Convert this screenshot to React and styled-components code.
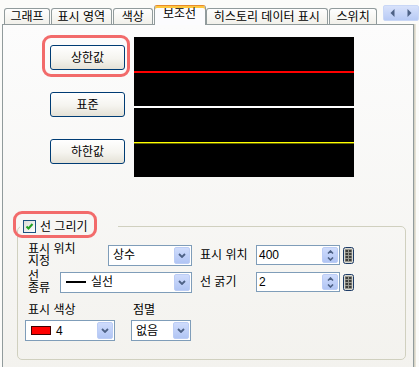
import React from "react";
import styled, { createGlobalStyle, css } from "styled-components";

const Global = createGlobalStyle`
  html, body { margin: 0; padding: 0; }
  body {
    background: #fbfbf9;
    font-family: "Liberation Sans", "Noto Sans CJK KR", sans-serif;
    font-size: 12px;
    color: #000;
  }
`;

const Window = styled.div`
  width: 419px;
  height: 367px;
  overflow: hidden;
  background: #fbfbf9;
`;

const TabBar = styled.div`
  display: flex;
  align-items: flex-end;
  gap: 1px;
  height: 24px;
  padding-left: 4px;
  box-sizing: border-box;
  position: relative;
  z-index: 2;
`;

const Tab = styled.div`
  box-sizing: border-box;
  width: ${(p) => p.$w}px;
  height: 16px;
  border: 1px solid #919b9c;
  border-bottom: none;
  border-radius: 3px 3px 0 0;
  background: linear-gradient(#fefefe, #f1f0ea);
  display: flex;
  justify-content: center;
  align-items: center;
  padding-top: 1px;
  line-height: 12px;
  white-space: nowrap;
  ${(p) =>
    p.$active &&
    css`
      height: 20px;
      margin-bottom: -1px;
      margin-right: -1px;
      background: #fcfcfe;
      border-top: 1px solid #e68b2c;
      box-shadow: inset 0 2px #ffc73c;
      padding-top: 0;
      padding-bottom: 3px;
    `}
`;

const Scroller = styled.div`
  align-self: flex-start;
  margin-top: 5px;
  margin-left: 5px;
  width: 36px;
  height: 16px;
  box-sizing: border-box;
  display: flex;
  border: 1px solid #c9d7f6;
  border-radius: 2px;
  background: linear-gradient(#d8e2fb, #b7caf5);
`;

const ScrollHalf = styled.div`
  flex: 1;
  display: flex;
  align-items: center;
  justify-content: center;
`;

const Panel = styled.div`
  box-sizing: border-box;
  margin-left: 2px;
  width: 412px;
  height: 348px;
  border: 1px solid #919b9c;
  background: linear-gradient(#fcfcfc, #f3f2ee);
  box-shadow: 1px 0 0 #d6d3c6, 2px 0 0 #e6e3d6;
  padding: 12px 0 0 11px;
  position: relative;
  z-index: 1;
`;

const Upper = styled.div`
  display: flex;
  gap: 9px;
  padding-left: 36px;
`;

const ButtonColumn = styled.div`
  display: flex;
  flex-direction: column;
  gap: 22px;
  padding-top: 8px;
`;

const Marked = styled.div`
  position: relative;
  display: flex;
  &::after {
    content: "";
    position: absolute;
    top: ${(p) => p.$t}px;
    left: ${(p) => p.$l}px;
    right: ${(p) => p.$r}px;
    bottom: ${(p) => p.$b}px;
    border: 3px solid #f26b6b;
    border-radius: 9px;
    pointer-events: none;
  }
`;

const PushButton = styled.button`
  width: 75px;
  height: 25px;
  box-sizing: border-box;
  border: 1px solid #003c74;
  border-radius: 3px;
  background: linear-gradient(#ffffff, #f5f4ef 55%, #e4e1d6);
  font-family: "Liberation Sans", "Noto Sans CJK KR", sans-serif;
  font-size: 12px;
  color: #000;
  padding: 0;
  line-height: 12px;
`;

const Chart = styled.svg`
  display: block;
  width: 220px;
  height: 140px;
  flex: none;
`;

const Fieldset = styled.fieldset`
  margin: 42px 0 0 3px;
  width: 389px;
  box-sizing: border-box;
  border: 1px solid #d0d0bf;
  border-radius: 5px;
  padding: 9px 10px 18px 10px;
  min-width: 0;
`;

const Legend = styled.legend`
  padding: 0 30px 0 3px;
  margin-left: -8px;
  line-height: 15px;
`;

const CheckLabel = styled.label`
  display: flex;
  align-items: center;
  gap: 4px;
  height: 15px;
  line-height: 12px;
`;

const CheckBox = styled.span`
  width: 13px;
  height: 13px;
  box-sizing: border-box;
  border: 1px solid #1c5180;
  background: linear-gradient(135deg, #dcdcd7, #ffffff);
  display: flex;
  align-items: center;
  justify-content: center;
`;

const FieldRow = styled.div`
  display: flex;
  align-items: center;
  height: 24px;
  margin-top: ${(p) => p.$mt || 0}px;
`;

const LeftCell = styled.div`
  display: flex;
  align-items: center;
  width: 164px;
  margin-right: 8px;
`;

const StackLabel = styled.div`
  width: ${(p) => p.$w}px;
  flex: none;
  line-height: 12px;
  white-space: nowrap;
`;

const SideLabel = styled.div`
  width: 56px;
  flex: none;
  line-height: 12px;
  white-space: nowrap;
`;

const Combo = styled.div`
  box-sizing: border-box;
  width: ${(p) => (p.$w ? `${p.$w}px` : "auto")};
  flex: ${(p) => (p.$w ? "none" : "1")};
  height: 21px;
  border: 1px solid #7f9db9;
  background: #fff;
  display: flex;
  padding: 1px;
`;

const ComboValue = styled.div`
  flex: 1;
  display: flex;
  align-items: center;
  gap: ${(p) => p.$gap || 0}px;
  padding-left: ${(p) => p.$pl ?? 3}px;
  line-height: 12px;
  white-space: nowrap;
`;

const DropButton = styled.div`
  width: 16px;
  box-sizing: border-box;
  border: 1px solid #bccdf5;
  border-radius: 2px;
  background: linear-gradient(#cfdcfc, #b1c5f4);
  display: flex;
  align-items: center;
  justify-content: center;
`;

const LineSample = styled.span`
  width: 20px;
  height: 2px;
  background: #000;
`;

const Swatch = styled.span`
  width: 20px;
  height: 9px;
  box-sizing: border-box;
  background: #ff0000;
  border: 1px solid #400000;
`;

const SpinBox = styled.div`
  box-sizing: border-box;
  width: 84px;
  height: 20px;
  border: 1px solid #7f9db9;
  background: #fff;
  display: flex;
  padding: 1px;
`;

const SpinValue = styled.div`
  flex: 1;
  padding-left: 1px;
  display: flex;
  align-items: center;
  line-height: 12px;
`;

const SpinButtons = styled.div`
  width: 14px;
  display: flex;
  flex-direction: column;
  border: 1px solid #bccdf5;
  border-radius: 2px;
  background: linear-gradient(#cfdcfc, #b1c5f4);
`;

const SpinHalf = styled.div`
  flex: 1;
  display: flex;
  align-items: center;
  justify-content: center;
`;

const KeypadButton = styled.div`
  margin-left: 3px;
  width: 11px;
  height: 17px;
  display: flex;
`;

const BottomRow = styled.div`
  display: flex;
  margin-top: 10px;
`;

const Column = styled.div`
  display: flex;
  flex-direction: column;
  gap: 4px;
  width: ${(p) => p.$w}px;
  margin-left: ${(p) => p.$ml}px;
`;

const ColLabel = styled.div`
  line-height: 12px;
  padding-left: ${(p) => p.$pl}px;
  white-space: nowrap;
`;

const Chevron = () => (
  <svg width="8" height="5" viewBox="0 0 8 5">
    <polyline points="1,1 4,4 7,1" fill="none" stroke="#4d6185" strokeWidth="1.8" />
  </svg>
);

const SmallChevron = ({ up }) => (
  <svg width="7" height="4" viewBox="0 0 7 4">
    <polyline
      points={up ? "1,3.5 3.5,1 6,3.5" : "1,0.5 3.5,3 6,0.5"}
      fill="none"
      stroke="#4d6185"
      strokeWidth="1.6"
    />
  </svg>
);

const Dropdown = ({ w, children, pl, gap }) => (
  <Combo $w={w}>
    <ComboValue $pl={pl} $gap={gap}>{children}</ComboValue>
    <DropButton>
      <Chevron />
    </DropButton>
  </Combo>
);

const Spinner = ({ value }) => (
  <>
    <SpinBox>
      <SpinValue>{value}</SpinValue>
      <SpinButtons>
        <SpinHalf>
          <SmallChevron up />
        </SpinHalf>
        <SpinHalf>
          <SmallChevron />
        </SpinHalf>
      </SpinButtons>
    </SpinBox>
    <KeypadButton>
      <svg width="11" height="17" viewBox="0 0 11 17">
        <rect x="0.5" y="0.5" width="10" height="16" rx="2" fill="#d9d8d0" stroke="#1d3b66" />
        <rect x="2" y="2" width="7" height="13" fill="#9a9a92" />
        {[3, 6, 9, 12].map((y) => (
          <g key={y}>
            <rect x="2.5" y={y} width="2.5" height="2" fill="#3d3d3a" />
            <rect x="6" y={y} width="2.5" height="2" fill="#3d3d3a" />
          </g>
        ))}
      </svg>
    </KeypadButton>
  </>
);

export default function App() {
  const tabs = [
    { label: "그래프", w: 46 },
    { label: "표시 영역", w: 61 },
    { label: "색상", w: 40 },
    { label: "보조선", w: 52, active: true },
    { label: "히스토리 데이터 표시", w: 123 },
    { label: "스위치", w: 48 },
  ];
  return (
    <Window>
      <Global />
      <TabBar>
        {tabs.map((t) => (
          <Tab key={t.label} $w={t.w} $active={t.active}>
            {t.label}
          </Tab>
        ))}
        <Scroller>
          <ScrollHalf>
            <svg width="5" height="8" viewBox="0 0 5 8">
              <polygon points="4.5,0 0.5,4 4.5,8" fill="#4d6185" />
            </svg>
          </ScrollHalf>
          <ScrollHalf>
            <svg width="5" height="8" viewBox="0 0 5 8">
              <polygon points="0.5,0 4.5,4 0.5,8" fill="#4d6185" />
            </svg>
          </ScrollHalf>
        </Scroller>
      </TabBar>
      <Panel>
        <Upper>
          <ButtonColumn>
            <Marked $t={-10} $l={-8} $r={-5} $b={-7}>
              <PushButton>상한값</PushButton>
            </Marked>
            <PushButton>표준</PushButton>
            <PushButton>하한값</PushButton>
          </ButtonColumn>
          <Chart viewBox="0 0 220 140">
            <rect x="0" y="0" width="220" height="140" fill="#000" />
            <rect x="0" y="34" width="220" height="2" fill="#ff0000" />
            <rect x="0" y="69" width="220" height="2" fill="#ffffff" />
            <rect x="0" y="105" width="220" height="1.4" fill="#ffff00" />
          </Chart>
        </Upper>
        <Fieldset>
          <Legend>
            <Marked $t={-8} $l={-10} $r={-9} $b={-4}>
              <CheckLabel>
                <CheckBox>
                  <svg width="9" height="9" viewBox="0 0 9 9">
                    <polyline points="1.5,4.5 3.5,6.5 7.5,2" fill="none" stroke="#21a121" strokeWidth="2" />
                  </svg>
                </CheckBox>
                선 그리기
              </CheckLabel>
            </Marked>
          </Legend>
          <FieldRow>
            <LeftCell>
              <StackLabel $w={80}>
                표시 위치
                <br />
                지정
              </StackLabel>
              <Dropdown>상수</Dropdown>
            </LeftCell>
            <SideLabel>표시 위치</SideLabel>
            <Spinner value="400" />
          </FieldRow>
          <FieldRow $mt={3}>
            <LeftCell>
              <StackLabel $w={32}>
                선
                <br />
                종류
              </StackLabel>
              <Dropdown pl={4} gap={5}>
                <LineSample />
                실선
              </Dropdown>
            </LeftCell>
            <SideLabel>선 굵기</SideLabel>
            <Spinner value="2" />
          </FieldRow>
          <BottomRow>
            <Column $w={90} $ml={-3}>
              <ColLabel $pl={3}>표시 색상</ColLabel>
              <Dropdown w={90} pl={4} gap={5}>
                <Swatch />4
              </Dropdown>
            </Column>
            <Column $w={60} $ml={16}>
              <ColLabel $pl={2}>점멸</ColLabel>
              <Dropdown w={60} pl={3}>없음</Dropdown>
            </Column>
          </BottomRow>
        </Fieldset>
      </Panel>
    </Window>
  );
}
